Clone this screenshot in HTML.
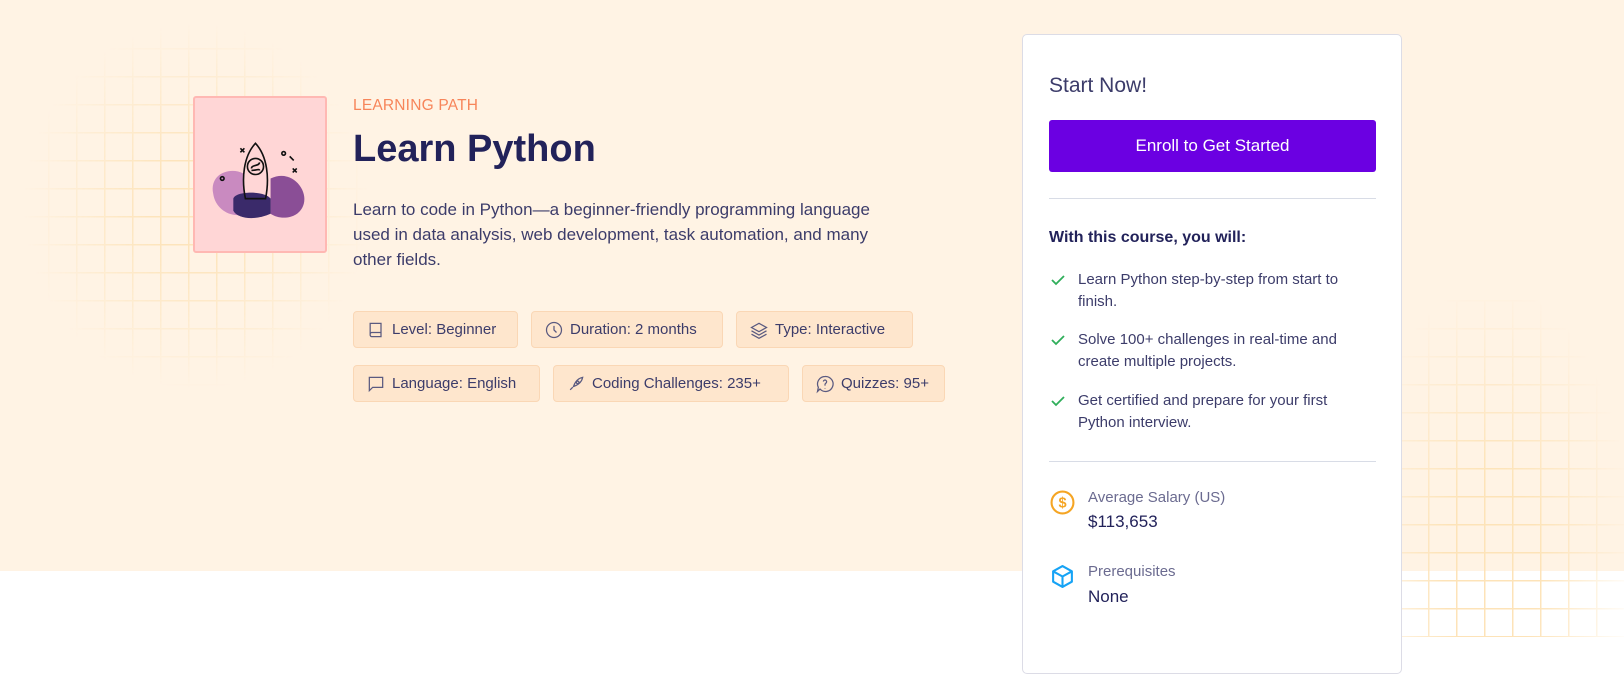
<!DOCTYPE html>
<html><head><meta charset="utf-8"><style>
*{margin:0;padding:0;box-sizing:border-box}
body{width:1624px;height:637px;overflow:hidden;background:#fff;font-family:"Liberation Sans",sans-serif;position:relative}
.hero{position:absolute;left:0;top:0;width:1624px;height:571px;background:#fff3e4}
.grid1{position:absolute;left:20px;top:20px;width:352px;height:372px;background-image:linear-gradient(#fde3b8 1.5px,transparent 1.5px),linear-gradient(90deg,#fde3b8 1.5px,transparent 1.5px);background-size:28px 28px;-webkit-mask-image:radial-gradient(ellipse at 50% 50%,#000 20%,transparent 70%);opacity:.9}
.grid2{position:absolute;left:1400px;top:300px;width:228px;height:337px;background-image:linear-gradient(#fde3b8 1.5px,transparent 1.5px),linear-gradient(90deg,#fde3b8 1.5px,transparent 1.5px);background-size:28px 28px;-webkit-mask-image:radial-gradient(ellipse at 40% 80%,#000 25%,transparent 75%)}
.thumb{position:absolute;left:193px;top:96px;width:134px;height:157px;background:#ffd6d6;border:2px solid #ffb8b3;border-radius:3px}
.lp{position:absolute;left:353px;top:97px;font-size:15.5px;color:#f7855a;letter-spacing:.2px}
h1{position:absolute;left:353px;top:128px;font-size:38px;color:#22225a;font-weight:bold}
.desc{position:absolute;left:353px;top:197px;width:540px;font-size:17px;line-height:25px;color:#3c3c6a}
.tag{position:absolute;height:37px;background:#fee6cd;border:1px solid #fad7b5;border-radius:4px;font-size:15px;color:#3c3c6a;display:flex;align-items:center;padding-left:12px;gap:6px}
.tag svg{width:20px;height:20px;fill:none;stroke:#5a5a80;stroke-width:1.5}
.card{position:absolute;left:1022px;top:34px;width:380px;height:640px;background:#fff;border:1px solid #dcdce6;border-radius:5px}
.sn{position:absolute;left:26px;top:39px;font-size:21px;color:#3c3c6a}
.btn{position:absolute;left:26px;top:85px;width:327px;height:52px;background:#6b00e2;border-radius:3px;color:#fff;font-size:17px;display:flex;align-items:center;justify-content:center}
.hr{position:absolute;left:26px;width:327px;height:1px;background:#d8dce6}
.wc{position:absolute;left:26px;top:194px;font-size:16px;font-weight:bold;color:#22225a}
.li{position:absolute;left:55px;width:300px;font-size:15px;line-height:22px;color:#3c3c6a}
.ck{position:absolute;left:27px;width:16px;height:16px}
.lab{position:absolute;left:65px;font-size:15px;color:#6b6b90}
.val{position:absolute;left:65px;font-size:17px;color:#22225a}
</style></head><body>
<div class="hero"></div>
<div class="grid1"></div>
<div class="grid2"></div>
<div class="thumb">
<svg width="130" height="153" viewBox="0 0 129 152">
<path d="M18 95 C14 75 35 68 48 75 L50 115 C35 120 20 110 18 95Z" fill="#c98ac0"/>
<path d="M75 80 C95 70 112 90 108 105 C104 120 85 122 75 115Z" fill="#8a4e96"/>
<path d="M38 100 C40 92 70 92 75 100 L75 115 C60 122 42 120 38 112Z" fill="#3a2a6a"/>
<g fill="none" stroke="#111" stroke-width="1.6">
<path d="M50 100 C46 80 48 58 60 45 C72 58 74 80 70 100Z"/><path d="M50 100 L70 100"/>
<circle cx="60" cy="68" r="8"/><path d="M56 70 c0-4 8-2 8-6 M56 72 c4 0 8-2 8 0"/>
<path d="M45 50 l4 4 M49 50 l-4 4 M97 70 l4 4 M101 70 l-4 4 M94 58 l4 4"/>
<circle cx="88" cy="55" r="1.8"/><circle cx="27" cy="80" r="1.8"/>
</g></svg></div>
<div class="lp">LEARNING PATH</div>
<h1>Learn Python</h1>
<div class="desc">Learn to code in Python—a beginner-friendly programming language used in data analysis, web development, task automation, and many other fields.</div>
<div class="tag" style="left:353px;top:311px;width:165px"><svg viewBox="0 0 24 24"><path d="M5 4h13v16H7a2 2 0 0 1-2-2z M5 17a2 2 0 0 1 2-2h11"/></svg>Level: Beginner</div>
<div class="tag" style="left:531px;top:311px;width:192px"><svg viewBox="0 0 24 24"><circle cx="12" cy="12" r="9"/><path d="M12 7v5l3 3"/></svg>Duration: 2 months</div>
<div class="tag" style="left:736px;top:311px;width:177px"><svg viewBox="0 0 24 24"><path d="M12 4l9 5-9 5-9-5z M3 13l9 5 9-5 M3 17l9 5 9-5"/></svg>Type: Interactive</div>
<div class="tag" style="left:353px;top:365px;width:187px"><svg viewBox="0 0 24 24"><path d="M4 4h16v12H8l-4 4z"/></svg>Language: English</div>
<div class="tag" style="left:553px;top:365px;width:236px"><svg viewBox="0 0 24 24"><path d="M5 19l3-3 M9 15c2-6 6-10 11-11-1 5-5 9-11 11z"/><circle cx="14" cy="10" r="1.5"/></svg>Coding Challenges: 235+</div>
<div class="tag" style="left:802px;top:365px;width:143px"><svg viewBox="0 0 24 24"><path d="M12 3a9 9 0 1 1-6 15l-3 3 1-5a9 9 0 0 1 8-13z M10 9a2 2 0 1 1 3 2c-1 1-1 1-1 3 M12 17v.5"/></svg>Quizzes: 95+</div>
<div class="card">
<div class="sn">Start Now!</div>
<div class="btn">Enroll to Get Started</div>
<div class="hr" style="top:163px"></div>
<div class="wc">With this course, you will:</div>
<svg class="ck" style="top:237px" viewBox="0 0 16 16"><path d="M2 8l4 4 8-8" fill="none" stroke="#2fae5a" stroke-width="1.8"/></svg>
<div class="li" style="top:234px">Learn Python step-by-step from start to finish.</div>
<svg class="ck" style="top:297px" viewBox="0 0 16 16"><path d="M2 8l4 4 8-8" fill="none" stroke="#2fae5a" stroke-width="1.8"/></svg>
<div class="li" style="top:294px">Solve 100+ challenges in real-time and create multiple projects.</div>
<svg class="ck" style="top:358px" viewBox="0 0 16 16"><path d="M2 8l4 4 8-8" fill="none" stroke="#2fae5a" stroke-width="1.8"/></svg>
<div class="li" style="top:355px">Get certified and prepare for your first Python interview.</div>
<div class="hr" style="top:426px"></div>
<svg style="position:absolute;left:27px;top:455px" width="25" height="25" viewBox="0 0 24 24"><circle cx="12" cy="12" r="10.5" fill="none" stroke="#f5a524" stroke-width="2"/><text x="12" y="17" text-anchor="middle" font-size="14" font-weight="bold" fill="#f5a524" font-family="Liberation Sans">$</text></svg>
<div class="lab" style="top:454px">Average Salary (US)</div>
<div class="val" style="top:477px">$113,653</div>
<svg style="position:absolute;left:27px;top:529px" width="25" height="25" viewBox="0 0 24 24"><path d="M12 2l9 5v10l-9 5-9-5V7z M3 7l9 5 9-5 M12 12v10" fill="none" stroke="#16a3f5" stroke-width="2" stroke-linejoin="round"/></svg>
<div class="lab" style="top:528px">Prerequisites</div>
<div class="val" style="top:552px">None</div>
</div>
</body></html>
